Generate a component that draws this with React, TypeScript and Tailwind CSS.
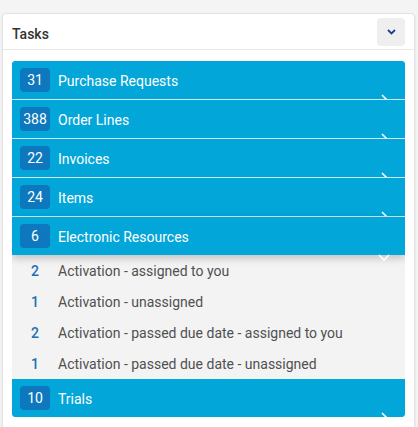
import React from "react";

type Task = { count: number; label: string; expanded?: boolean; subs?: { count: number; label: string }[] };

const TASKS: Task[] = [
  { count: 31, label: "Purchase Requests" },
  { count: 388, label: "Order Lines" },
  { count: 22, label: "Invoices" },
  { count: 24, label: "Items" },
  {
    count: 6,
    label: "Electronic Resources",
    expanded: true,
    subs: [
      { count: 2, label: "Activation - assigned to you" },
      { count: 1, label: "Activation - unassigned" },
      { count: 2, label: "Activation - passed due date - assigned to you" },
      { count: 1, label: "Activation - passed due date - unassigned" },
    ],
  },
  { count: 10, label: "Trials" },
];

function RowChevron({ open }: { open?: boolean }) {
  if (open) {
    return (
      <svg className="absolute left-[366px] top-[37px] z-20" width="12" height="7" viewBox="0 0 12 7">
        <polyline points="1,1 6,6 11,1" fill="none" stroke="white" strokeWidth="1.6" />
      </svg>
    );
  }
  return (
    <svg className="absolute left-[369px] top-[33px]" width="9" height="14" viewBox="0 0 9 14">
      <polyline points="1,1 7,7 1,13" fill="none" stroke="white" strokeWidth="1.6" />
    </svg>
  );
}

export default function App() {
  return (
    <div className="min-h-screen bg-[#f4f4f4] pl-[2px] pr-[3px] pt-[13px] font-['Roboto',sans-serif] text-sm">
      <div className="h-[430px] rounded border border-[#e2e2e2] bg-white shadow-[0_1px_3px_rgba(0,0,0,0.08)]">
        <div className="flex h-[36px] items-center justify-between border-b border-[#e8e8e8] pl-[9px] pr-[9px]">
          <span className="pt-[5px] font-medium text-[#333]">Tasks</span>
          <button className="flex h-[28px] w-[28px] items-center justify-center rounded bg-[#efefef]">
            <svg width="9" height="6" viewBox="0 0 9 6">
              <polyline points="1,1 4.5,4.5 8,1" fill="none" stroke="#1f3f8a" strokeWidth="1.8" />
            </svg>
          </button>
        </div>
        <div className="px-[9px] pt-[11px]">
          <div className="overflow-hidden rounded bg-[#02a6d8]">
            {TASKS.map((t, i) => (
              <div key={t.label}>
                <div
                  className={
                    t.expanded
                      ? "relative z-10 flex h-[38px] items-center gap-2 bg-[#02a6d8] pl-2 text-white shadow-[0_3px_8px_rgba(0,0,0,0.22)]"
                      : i === TASKS.length - 1
                        ? "relative flex h-[38px] items-center gap-2 overflow-hidden bg-[#02a6d8] pl-2 text-white"
                        : "relative flex h-[39px] items-center gap-2 overflow-hidden border-b border-[#cfeaf5] bg-[#02a6d8] pl-2 text-white"
                  }
                >
                  <span className="flex h-[24px] w-[30px] items-center justify-center rounded bg-[#0d78bd] text-[14px]">
                    {t.count}
                  </span>
                  <span className="pt-[2px] text-[14px]">{t.label}</span>
                  <RowChevron open={t.expanded} />
                </div>
                {t.subs && (
                  <div className="bg-[#f3f3f3]">
                    {t.subs.map((s) => (
                      <div key={s.label} className="flex h-[31px] items-center gap-2 pl-2 pt-[1px]">
                        <span className="w-[30px] text-center font-medium text-[#1d6fb3]">{s.count}</span>
                        <span className="text-[#505050]">{s.label}</span>
                      </div>
                    ))}
                  </div>
                )}
              </div>
            ))}
          </div>
        </div>
      </div>
    </div>
  );
}
